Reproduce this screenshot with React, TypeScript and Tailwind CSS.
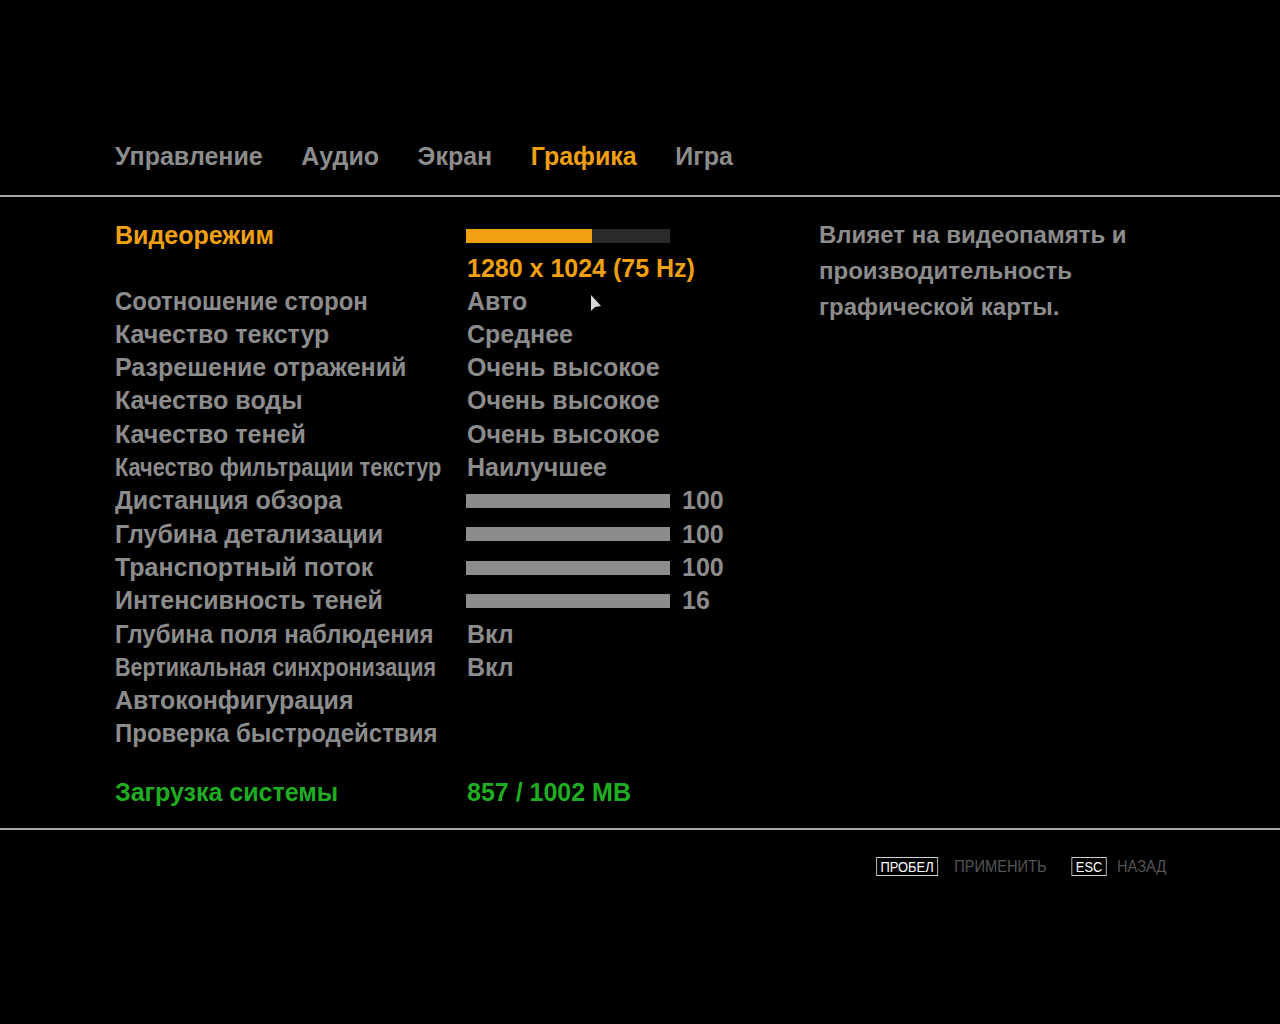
const font = { fontFamily: '"Liberation Sans", Arial, sans-serif' };

type Row = { label: string; value?: string; bar?: number; num?: string; squeeze?: string };

const rows: Row[] = [
  { label: "Соотношение сторон", value: "Авто", squeeze: "scale-x-[0.96]" },
  { label: "Качество текстур", value: "Среднее" },
  { label: "Разрешение отражений", value: "Очень высокое" },
  { label: "Качество воды", value: "Очень высокое" },
  { label: "Качество теней", value: "Очень высокое" },
  { label: "Качество фильтрации текстур", value: "Наилучшее", squeeze: "scale-x-[0.87]" },
  { label: "Дистанция обзора", bar: 100, num: "100" },
  { label: "Глубина детализации", bar: 100, num: "100" },
  { label: "Транспортный поток", bar: 100, num: "100" },
  { label: "Интенсивность теней", bar: 100, num: "16" },
  { label: "Глубина поля наблюдения", value: "Вкл", squeeze: "scale-x-[0.96]" },
  { label: "Вертикальная синхронизация", value: "Вкл", squeeze: "scale-x-[0.86]" },
  { label: "Автоконфигурация" },
  { label: "Проверка быстродействия", squeeze: "scale-x-[0.96]" },
];

const tabs = ["Управление", "Аудио", "Экран", "Графика", "Игра"];

export default function App() {
  return (
    <div className="relative w-[1280px] h-[1024px] bg-black overflow-hidden font-bold" style={font}>
      <div className="h-[136px]" />
      <div className="flex gap-[38.5px] pl-[115px] h-[40px] items-center text-[25px] leading-none">
        {tabs.map((t) => (
          <span key={t} className={t === "Графика" ? "text-[#f0a010]" : "text-[#8c8c8c]"}>
            {t}
          </span>
        ))}
      </div>
      <div className="h-[19px]" />
      <div className="h-[2px] bg-[#a8a8a8]" />
      <div className="flex pl-[115px] pt-[22px]">
        <div className="w-[704px] text-[25px] leading-[33.3px] text-[#8c8c8c]">
          <div className="flex">
            <span className="w-[351px] text-[#f0a010]">Видеорежим</span>
            <div className="flex items-center h-[33.3px]">
              <div className="w-[204px] h-[14px] bg-[#2a2a2a] flex">
                <div className="w-[126px] h-full bg-[#f0a010]" />
              </div>
            </div>
          </div>
          <div className="flex">
            <span className="w-[352px]" />
            <span className="text-[#f0a010]">1280 x 1024 (75 Hz)</span>
          </div>
          <div className="-mt-[1px]">
            {rows.map((r) => (
              <div key={r.label} className="flex">
                <div className="w-[352px] whitespace-nowrap">
                  <span className={`inline-block origin-left ${r.squeeze ?? ""}`}>{r.label}</span>
                </div>
                {r.value && <span>{r.value}</span>}
                {r.bar !== undefined && (
                  <div className="flex items-center h-[33.3px] -ml-[1px]">
                    <div className="w-[204px] h-[14px] bg-[#8c8c8c]" />
                    <span className="ml-[12px] leading-[33.3px]">{r.num}</span>
                  </div>
                )}
              </div>
            ))}
          </div>
          <div className="h-[25px]" />
          <div className="flex text-[#1fae22]">
            <span className="w-[352px]">Загрузка системы</span>
            <span>857 / 1002 MB</span>
          </div>
        </div>
        <div className="w-[330px] -mt-[2px] text-[24px] leading-[36px] text-[#8c8c8c]">
          Влияет на видеопамять и производительность графической карты.
        </div>
      </div>
      <div className="h-[19px]" />
      <div className="h-[2px] bg-[#a8a8a8]" />
      <div className="flex justify-end pr-[114px] pt-[27px]">
        <div className="flex items-center scale-x-[0.86] origin-right text-[17px] font-normal leading-none">
          <span className="border border-[#d0d0d0] text-white px-[4px] py-[1px] text-[15px]">ПРОБЕЛ</span>
          <span className="ml-[19px] text-[#555]">ПРИМЕНИТЬ</span>
          <span className="ml-[29px] border border-[#d0d0d0] text-white px-[4px] py-[1px] text-[15px]">ESC</span>
          <span className="ml-[12px] text-[#555]">НАЗАД</span>
        </div>
      </div>

      {/* mouse cursor */}
      <svg className="absolute left-[590px] top-[294px]" width="12" height="20" viewBox="0 0 12 20">
        <path d="M1 1 L1 17 L5 13 L11 12 Z" fill="#d8d8d8" />
      </svg>
    </div>
  );
}
